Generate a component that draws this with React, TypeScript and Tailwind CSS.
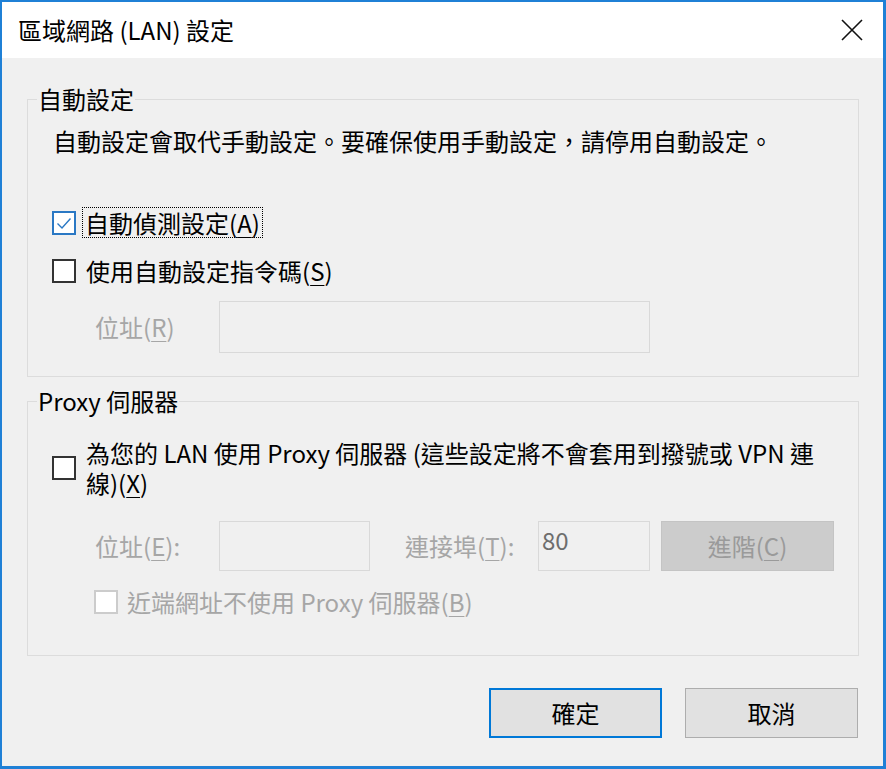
import React from 'react';

// Windows "LAN settings" dialog, zh-TW

function CheckBox({ checked, disabled }: { checked?: boolean; disabled?: boolean }) {
  const border = checked ? 'border-[#2a78c4]' : disabled ? 'border-[#cccccc]' : 'border-[#333333]';
  return (
    <span className={`flex h-[24px] w-[24px] shrink-0 items-center justify-center border-2 bg-white ${border}`}>
      {checked && (
        <svg width="20" height="20" viewBox="0 0 20 20">
          <path d="M3.5 10.5 L8 15 L16.5 5.5" stroke="#2a78c4" strokeWidth="1.4" fill="none" />
        </svg>
      )}
    </span>
  );
}

function Key({ k }: { k: string }) {
  return <span className="underline underline-offset-[4px] decoration-1">{k}</span>;
}

export default function App() {
  return (
    <div className="flex h-[769px] w-[886px] flex-col border-2 border-r-[3px] border-b-[3px] border-[#1f80d6] bg-[#f0f0f0] text-[24px] leading-[30px] text-black font-['Noto_Sans_CJK_TC','Noto_Sans',sans-serif]">
      {/* Title bar */}
      <div className="flex h-[56px] shrink-0 items-center justify-between bg-white pl-[16px] pr-[20px]">
        <span>區域網路 (LAN) 設定</span>
        <svg width="22" height="22" viewBox="0 0 22 22">
          <path d="M1 1 L21 21 M21 1 L1 21" stroke="#111" strokeWidth="1.6" />
        </svg>
      </div>

      <div className="flex flex-col pl-[25px] pr-[24px] pt-[26px]">
        {/* Automatic configuration */}
        <fieldset className="border border-[#dcdcdc]">
          <legend className="ml-[9px] px-[1px] leading-[30px]">自動設定</legend>
          <div className="flex flex-col pl-[24px] pb-[23px]">
            <p className="ml-px mt-[12px]">自動設定會取代手動設定。要確保使用手動設定，請停用自動設定。</p>

            <div className="mt-[51px] flex h-[31px] items-center">
              <CheckBox checked />
              <span className="ml-[7px] px-[2px] leading-[29px] outline outline-1 outline-dotted outline-black">
                自動偵測設定(<Key k="A" />)
              </span>
            </div>

            <div className="mt-[18px] flex h-[30px] items-center">
              <CheckBox />
              <span className="ml-[10px]">
                使用自動設定指令碼(<Key k="S" />)
              </span>
            </div>

            <div className="ml-[43px] mt-[15px] flex items-center">
              <span className="w-[124px] text-[#a6a6a6]">
                位址(<Key k="R" />)
              </span>
              <div className="h-[52px] w-[431px] border border-[#d9d9d9]" />
            </div>
          </div>
        </fieldset>

        {/* Proxy server */}
        <fieldset className="mt-[9px] border border-[#dcdcdc]">
          <legend className="ml-[9px] px-[1px] leading-[30px]">Proxy 伺服器</legend>
          <div className="flex flex-col pl-[24px] pb-[38px]">
            <div className="mt-[22px] flex items-center">
              <CheckBox />
              <span className="ml-[10px]">
                為您的 LAN 使用 Proxy 伺服器 (這些設定將不會套用到撥號或 VPN 連
                <br />
                線)(<Key k="X" />)
              </span>
            </div>

            <div className="ml-[43px] mt-[23px] flex items-center">
              <span className="w-[124px] text-[#a6a6a6]">
                位址(<Key k="E" />):
              </span>
              <div className="h-[50px] w-[151px] border border-[#d9d9d9]" />
              <span className="ml-[35px] w-[133px] text-[#a6a6a6]">
                連接埠(<Key k="T" />):
              </span>
              <div className="h-[50px] w-[112px] border border-[#d9d9d9] pl-[3px] leading-[36px] text-[#6d6d6d]">80</div>
              <div className="ml-[11px] flex h-[50px] w-[173px] items-center justify-center border border-[#c4c4c4] bg-[#cccccc] text-[#9a9a9a]">
                進階(<Key k="C" />)
              </div>
            </div>

            <div className="ml-[42px] mt-[16px] flex h-[30px] items-center">
              <CheckBox disabled />
              <span className="ml-[9px] text-[#a6a6a6]">
                近端網址不使用 Proxy 伺服器(<Key k="B" />)
              </span>
            </div>
          </div>
        </fieldset>

        {/* Dialog buttons */}
        <div className="mr-[1px] mt-[32px] flex justify-end gap-[23px]">
          <button className="h-[50px] w-[173px] border-2 border-[#0078d7] bg-[#e1e1e1]">確定</button>
          <button className="h-[50px] w-[173px] border border-[#adadad] bg-[#e1e1e1]">取消</button>
        </div>
      </div>
    </div>
  );
}
